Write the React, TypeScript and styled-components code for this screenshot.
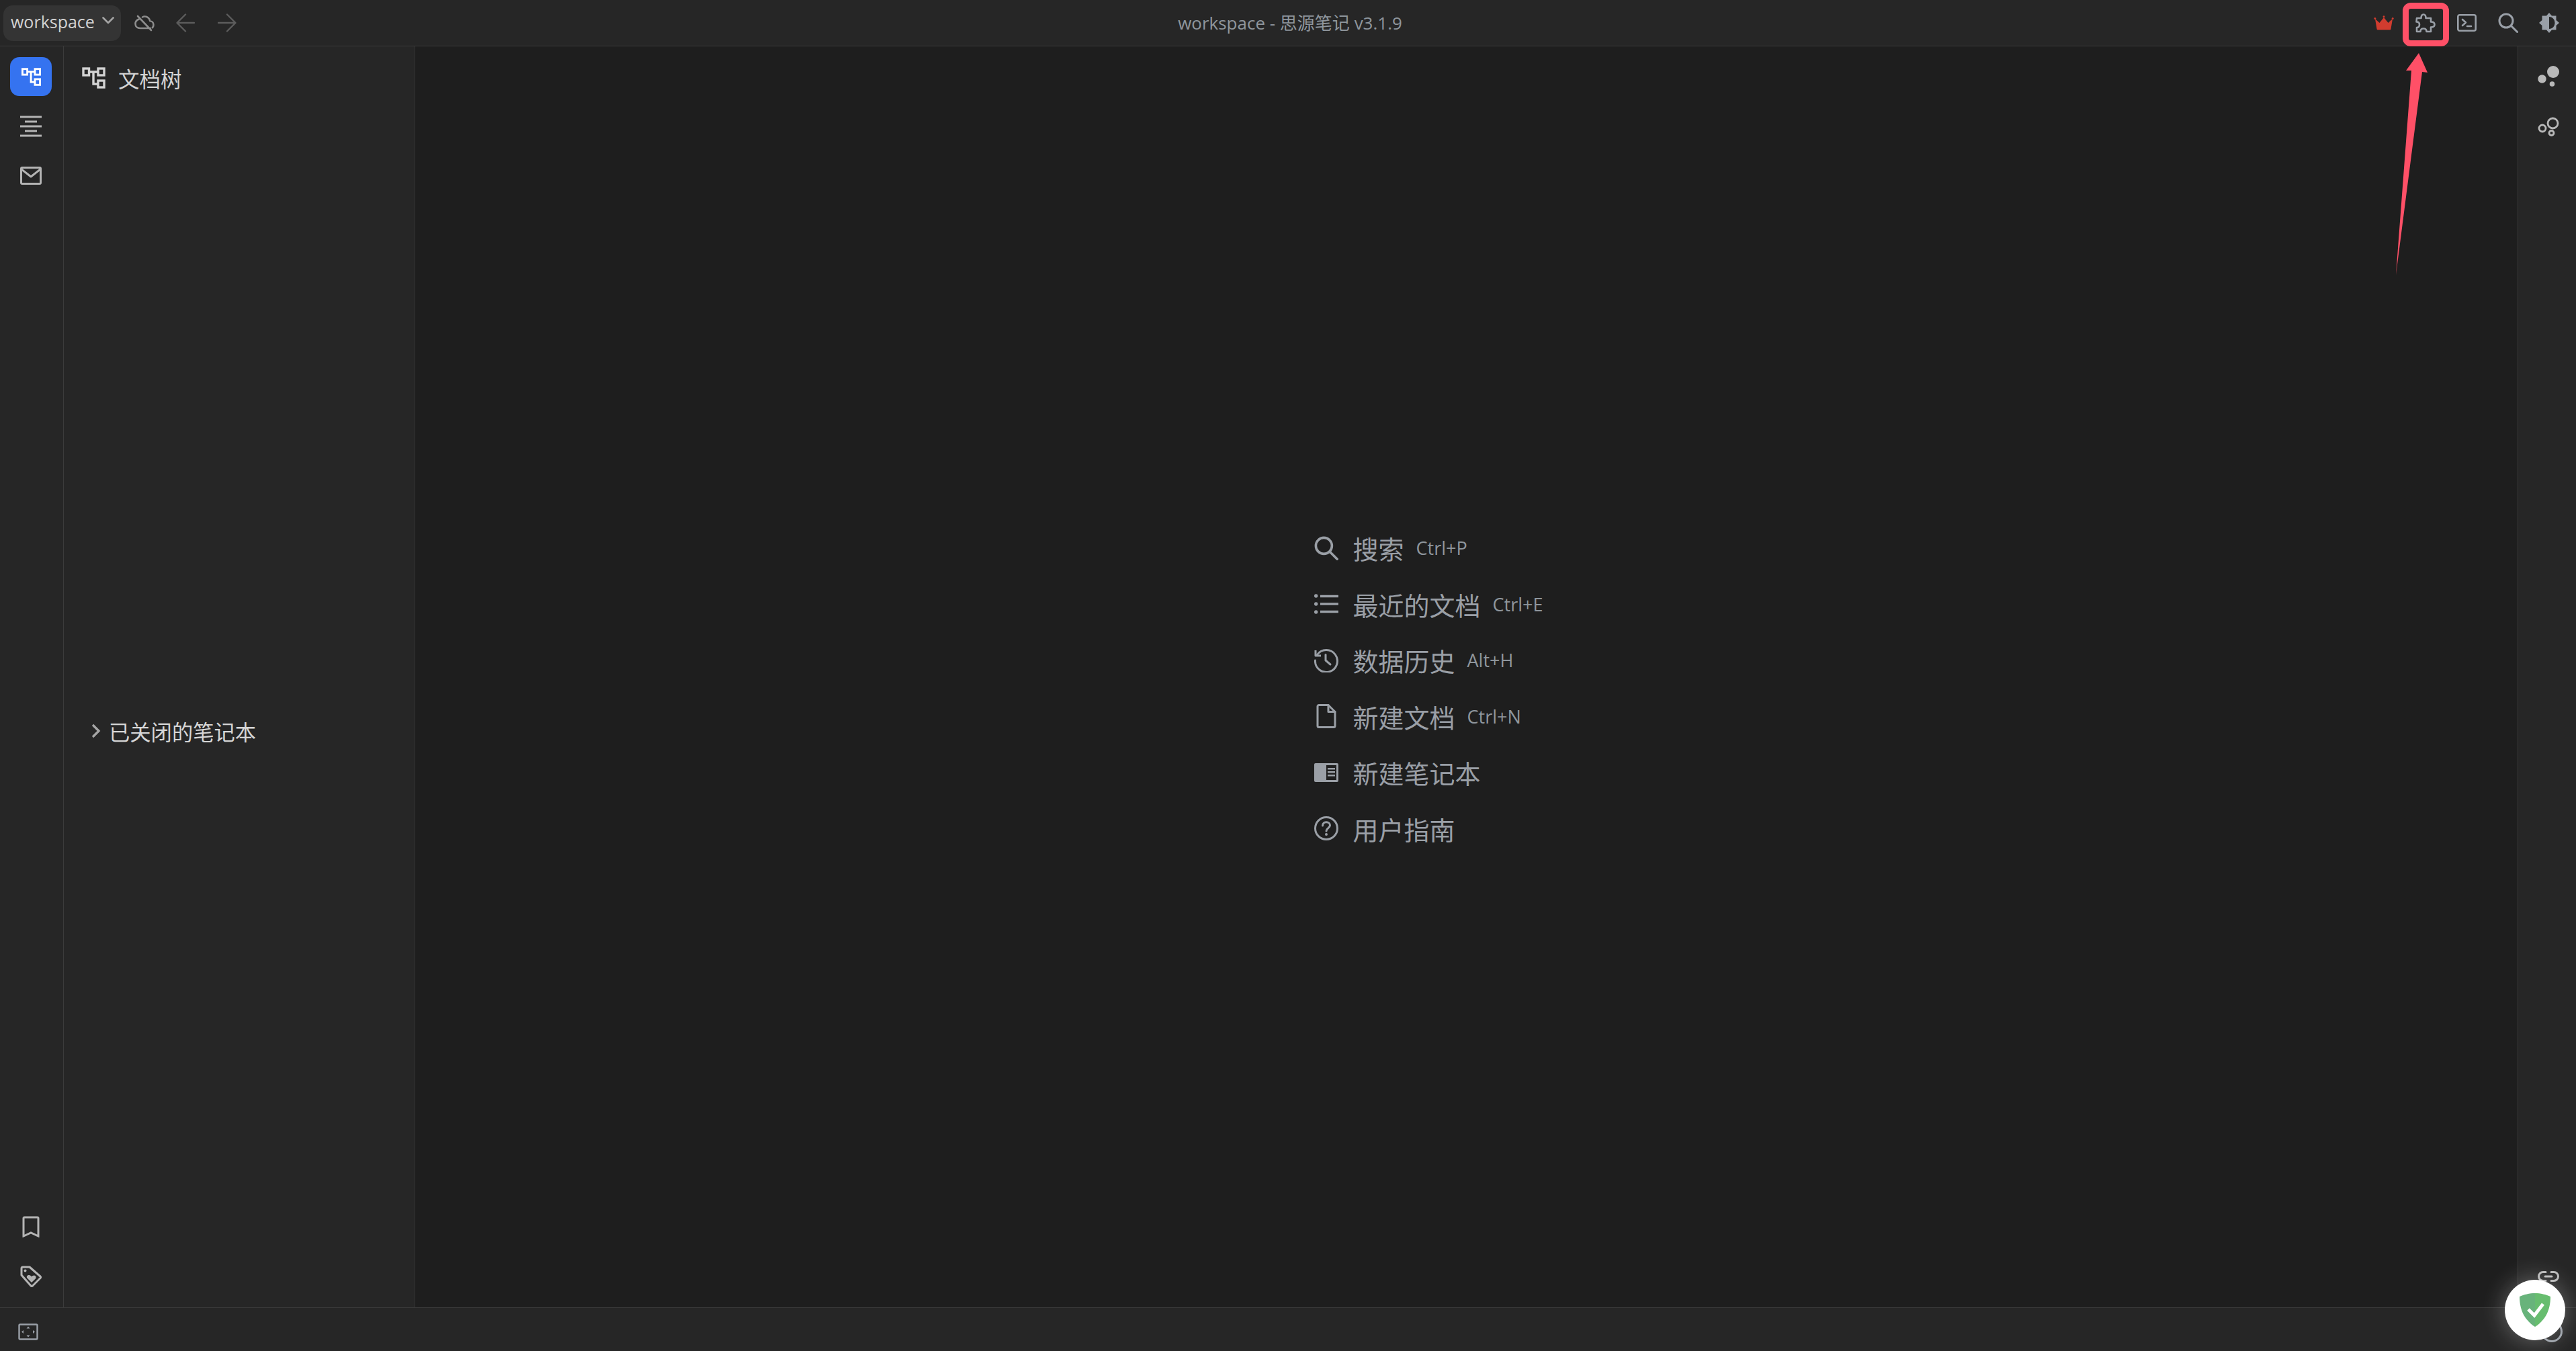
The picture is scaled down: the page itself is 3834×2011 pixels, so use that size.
import React from 'react'
import styled, { createGlobalStyle } from 'styled-components'

const GlobalStyle = createGlobalStyle`
  html, body {
    margin: 0;
    padding: 0;
    background: #1e1e1e;
  }
  body {
    font-family: "Open Sans", "Noto Sans", "Noto Sans CJK SC", sans-serif;
  }
`

type IconProps = { $w: number; $h: number; $color?: string }

const Svg = styled.svg<IconProps>`
  width: ${p => p.$w}px;
  height: ${p => p.$h}px;
  flex-shrink: 0;
  display: block;
  color: ${p => p.$color || 'currentColor'};
  fill: none;
  stroke: currentColor;
  stroke-linecap: round;
  stroke-linejoin: round;
`

const TreeIcon = ({ w = 35, h = 32 }: { w?: number; h?: number }) => (
  <Svg $w={w} $h={h} viewBox="0 0 35 32" strokeWidth="3.4" style={{ strokeLinecap: 'butt', strokeLinejoin: 'miter' }}>
    <rect x="2" y="2" width="8.5" height="10" />
    <rect x="24" y="2" width="9" height="10" />
    <rect x="24" y="20" width="9" height="10" />
    <path d="M10.5 7H24M17 7v18h7" />
  </Svg>
)

const OutlineIcon = () => (
  <Svg $w={32} $h={32} viewBox="0 0 32 32" strokeWidth="3" style={{ strokeLinecap: 'butt' }}>
    <path d="M0 2h32M7 9h18M0 16h32M7 23h18M0 30h32" />
  </Svg>
)

const InboxIcon = () => (
  <Svg $w={32} $h={28} viewBox="0 0 32 28" strokeWidth="3">
    <rect x="1.5" y="1.5" width="29" height="24" rx="1.5" />
    <path d="M2 4l14 11L30 4" />
  </Svg>
)

const BookmarkIcon = () => (
  <Svg $w={26} $h={32} viewBox="0 0 26 32" strokeWidth="3" style={{ strokeLinecap: 'butt', strokeLinejoin: 'miter' }}>
    <path d="M2 30V3.5A1.5 1.5 0 0 1 3.5 2h19A1.5 1.5 0 0 1 24 3.5V30l-11-5z" />
  </Svg>
)

const TagIcon = () => (
  <Svg $w={32} $h={32} viewBox="0 0 32 32" strokeWidth="3">
    <path d="M2 4a2 2 0 0 1 2-2h10l16 14a2 2 0 0 1 0 2.500L18.500 30a2 2 0 0 1-2.500 0L2 14z" />
    <circle cx="7.500" cy="7.500" r="2" fill="currentColor" stroke="none" />
    <path d="M17 25l-6.500-6.500c-1.800-2 .2-5 2.800-4.500 1.600.3 2.700 1.200 3.700 2.300 1-1.100 2.300-1.800 3.800-1.800 2.500.2 3.700 3 2 5z" fill="currentColor" stroke="none" />
  </Svg>
)

const LayoutIcon = () => (
  <Svg $w={30} $h={25} viewBox="0 0 30 25" strokeWidth="2.400">
    <rect x="1.500" y="1.500" width="27" height="22" rx="1.500" />
    <path d="M15 4.500l2.500 3h-5zM15 20.500l2.500-3h-5zM5 12.500l3-2.500v5zM25 12.500l-3-2.500v5z" fill="currentColor" stroke="none" />
  </Svg>
)

const CloudOffIcon = () => (
  <Svg $w={30} $h={25} viewBox="0 0 30 25" strokeWidth="2.600">
    <path d="M7 6.500C3.800 7.500 1.500 10 1.500 13.500c0 4 3 6.500 7 6.500h15.500M12 3.500c1-.6 2.200-1 3.500-1 4 0 7.200 3 7.800 6.800 3.200.2 5.200 2.700 5.200 5.700 0 1.700-.6 3-1.600 4.200M5 2l20 21" />
  </Svg>
)

const ArrowIcon = ({ flip }: { flip?: boolean }) => (
  <Svg $w={28} $h={28} viewBox="0 0 28 28" strokeWidth="2.400" style={flip ? { transform: 'scaleX(-1)' } : undefined}>
    <path d="M27 14H2M14 1.500L1.500 14 14 26.500" />
  </Svg>
)

const CrownIcon = () => (
  <Svg $w={30} $h={22} viewBox="0 0 30 22" style={{ stroke: 'none', fill: '#d13c2f' }}>
    <path d="M2 5l6.500 6L15 3l6.500 8L28 5l-2.500 15a1.500 1.500 0 0 1-1.500 1.500H6A1.500 1.500 0 0 1 4.500 20z" />
    <circle cx="1.800" cy="4.500" r="1.500" />
    <circle cx="15" cy="1.800" r="1.500" />
    <circle cx="28.200" cy="4.500" r="1.500" />
  </Svg>
)

const PluginIcon = () => (
  <Svg $w={31} $h={29} viewBox="-1 -1 31 29" strokeWidth="2.600">
    <path d="M2 6H8.500C8.500 2 10 .5 12 .5S15.500 2 15.500 6H23V11.500C27 11.500 28.500 13.500 28.500 15.500S27 19.500 23 19.500V26H16.500C16.500 23 14.500 21.500 12 21.500S7.500 23 7.500 26H2V20C5 20 6 18 6 15.500S5 11.500 1.500 11.500z" />
  </Svg>
)

const TerminalIcon = () => (
  <Svg $w={29} $h={26} viewBox="0 0 29 26" strokeWidth="2.600">
    <rect x="1.300" y="1.300" width="26.400" height="23.400" rx="2.500" />
    <path d="M8 8l5 4.500L8 17M15 18h6" />
  </Svg>
)

const SearchIcon = ({ size = 30 }: { size?: number }) => (
  <Svg $w={size} $h={size} viewBox="0 0 30 30" strokeWidth="3">
    <circle cx="12" cy="12" r="10" />
    <path d="M19.500 19.500L28.500 28.500" />
  </Svg>
)

const ThemeIcon = () => (
  <Svg $w={30} $h={30} viewBox="0 0 30 30" style={{ stroke: 'none', fill: 'currentColor' }}>
    <path fillRule="evenodd" d="M15 0l4 4.500h6.500V11l4.500 4-4.500 4v6.500H19L15 30l-4-4.500H4.500V19L0 15l4.500-4V4.500H11zM15 6v18c5 0 8.500-4 8.500-9s-3.500-9-8.500-9z" />
  </Svg>
)

const DotsIcon = ({ hollow }: { hollow?: boolean }) => (
  <Svg $w={32} $h={32} viewBox="0 0 32 32" strokeWidth={hollow ? 2.800 : 0} style={hollow ? undefined : { fill: 'currentColor' }}>
    {hollow ? (
      <>
        <circle cx="22.500" cy="9.500" r="7.500" />
        <circle cx="7" cy="17" r="5" />
        <circle cx="20.500" cy="24" r="3.500" />
      </>
    ) : (
      <>
        <circle cx="23" cy="9" r="9" />
        <circle cx="6.500" cy="19.500" r="6.200" />
        <circle cx="21.500" cy="27" r="3.800" />
      </>
    )}
  </Svg>
)

const LinkIcon = () => (
  <Svg $w={32} $h={16} viewBox="0 0 32 16" strokeWidth="3">
    <path d="M12 1.500H8a6.500 6.500 0 0 0 0 13h4M20 1.500h4a6.500 6.500 0 0 1 0 13h-4M11 8h10" />
  </Svg>
)

const HelpCircleIcon = () => (
  <Svg $w={32} $h={32} viewBox="0 0 32 32" strokeWidth="3">
    <circle cx="16" cy="16" r="14.500" />
  </Svg>
)

const ListIcon = () => (
  <Svg $w={36} $h={30} viewBox="0 0 36 30" strokeWidth="3.400" style={{ strokeLinecap: 'butt' }}>
    <path d="M9 3.500h27M9 15h27M9 26.500h27" />
    <circle cx="2.700" cy="3" r="2.700" fill="currentColor" stroke="none" />
    <circle cx="2.700" cy="15" r="2.700" fill="currentColor" stroke="none" />
    <circle cx="2.700" cy="27" r="2.700" fill="currentColor" stroke="none" />
  </Svg>
)

const HistoryIcon = () => (
  <Svg $w={36} $h={36} viewBox="0 0 36 36" strokeWidth="3">
    <path d="M4.500 9.500A16.500 16.500 0 1 1 1.500 18" />
    <path d="M2 3v8h8" strokeLinecap="butt" />
    <path d="M17 9.500V18l7 6" />
  </Svg>
)

const FileIcon = () => (
  <Svg $w={30} $h={36} viewBox="0 0 30 36" strokeWidth="3">
    <path d="M2 3.500A2 2 0 0 1 4 1.500h14l10 10V32.500a2 2 0 0 1-2 2H4a2 2 0 0 1-2-2z" />
    <path d="M18 1.500v10h10" />
  </Svg>
)

const NotebookIcon = () => (
  <Svg $w={36} $h={28} viewBox="0 0 36 28" style={{ stroke: 'none', fill: 'currentColor' }}>
    <path fillRule="evenodd" d="M2 0h32a2 2 0 0 1 2 2v24a2 2 0 0 1-2 2H2a2 2 0 0 1-2-2V2a2 2 0 0 1 2-2zM18 3v22h15V3zM20 7h11v2.500H20zM20 12h11v2.500H20zM20 17h11v2.500H20z" />
  </Svg>
)

const HelpIcon = () => (
  <Svg $w={36} $h={36} viewBox="0 0 36 36" strokeWidth="3">
    <circle cx="18" cy="18" r="16.500" />
    <path d="M12.500 14c0-3.200 2.500-5.300 5.500-5.300s5.500 2 5.500 4.800c0 4-5.500 4.300-5.500 8.500" />
    <circle cx="18" cy="27" r="2" fill="currentColor" stroke="none" />
  </Svg>
)

const Chevron = () => (
  <Svg $w={14} $h={22} viewBox="0 0 14 22" strokeWidth="3.400" style={{ strokeLinecap: 'butt', strokeLinejoin: 'miter' }}>
    <path d="M2 2l9 9-9 9" />
  </Svg>
)

const CaretDown = () => (
  <Svg $w={18} $h={11} viewBox="0 0 18 11" strokeWidth="2.600">
    <path d="M1.500 1.500L9 9l7.500-7.500" />
  </Svg>
)

const MENU_ITEMS = [
  { label: '搜索', key: 'Ctrl+P', icon: <SearchIcon size={36} /> },
  { label: '最近的文档', key: 'Ctrl+E', icon: <ListIcon /> },
  { label: '数据历史', key: 'Alt+H', icon: <HistoryIcon /> },
  { label: '新建文档', key: 'Ctrl+N', icon: <FileIcon /> },
  { label: '新建笔记本', icon: <NotebookIcon /> },
  { label: '用户指南', icon: <HelpIcon /> },
]

export default function App() {
  return (
    <Page>
      <GlobalStyle />
      <Toolbar>
        <ToolbarSide>
          <WorkspaceButton>
            workspace
            <CaretDown />
          </WorkspaceButton>
          <ToolButton $color="#8d8d8d"><CloudOffIcon /></ToolButton>
          <ToolButton $color="#5c5c5c"><ArrowIcon /></ToolButton>
          <ToolButton $color="#5c5c5c"><ArrowIcon flip /></ToolButton>
        </ToolbarSide>
        <Title>workspace - 思源笔记 v3.1.9</Title>
        <ToolbarRight>
          <ToolButton><CrownIcon /></ToolButton>
          <ToolButton>
            <PluginIcon />
            <Highlight />
          </ToolButton>
          <ToolButton><TerminalIcon /></ToolButton>
          <ToolButton><SearchIcon /></ToolButton>
          <ToolButton><ThemeIcon /></ToolButton>
        </ToolbarRight>
      </Toolbar>

      <Body>
        <LeftDock>
          <DockButton $active><TreeIcon w={31} h={27} /></DockButton>
          <DockButton><OutlineIcon /></DockButton>
          <DockButton><InboxIcon /></DockButton>
          <DockSpacer />
          <DockButton><BookmarkIcon /></DockButton>
          <DockButton><TagIcon /></DockButton>
        </LeftDock>

        <TreePanel>
          <PanelHeader>
            <TreeIcon />
            文档树
          </PanelHeader>
          <ClosedRow>
            <Chevron />
            已关闭的笔记本
          </ClosedRow>
        </TreePanel>

        <Main>
          <EmptyList>
            {MENU_ITEMS.map(item => (
              <EmptyItem key={item.label}>
                <EmptyIcon>{item.icon}</EmptyIcon>
                <EmptyLabel>{item.label}</EmptyLabel>
                {item.key && <Shortcut>{item.key}</Shortcut>}
              </EmptyItem>
            ))}
          </EmptyList>
        </Main>

        <RightDock>
          <RightButton><DotsIcon /></RightButton>
          <RightButton><DotsIcon hollow /></RightButton>
          <DockSpacer />
          <LinkSlot><LinkIcon /></LinkSlot>
        </RightDock>
      </Body>

      <StatusBar>
        <LayoutIcon />
        <HelpCircleIcon />
      </StatusBar>

      <CalloutArrow viewBox="0 0 60 335">
        <polygon points="40,0 21,26 29,26 6,330 45,28 53,29" />
      </CalloutArrow>

      <ShieldBadge>
        <svg width="48" height="50" viewBox="0 0 48 50">
          <path d="M24 0C16 0 7 2 1 5c0 18 6 34 23 45z" fill="#68b37b" />
          <path d="M24 0c8 0 17 2 23 5 0 18-6 34-23 45z" fill="#67bd6f" />
          <path d="M14 24l9 9 13-17" fill="none" stroke="#fff" strokeWidth="5" />
        </svg>
      </ShieldBadge>
    </Page>
  )
}

const Page = styled.div`
  position: relative;
  width: 100vw;
  height: 100vh;
  display: flex;
  flex-direction: column;
  overflow: hidden;
  background: #1e1e1e;
`

const Toolbar = styled.header`
  height: 68px;
  flex-shrink: 0;
  display: grid;
  grid-template-columns: 1fr auto 1fr;
  align-items: center;
  background: #262626;
  border-bottom: 1px solid #3b3b3b;
`

const ToolbarSide = styled.div`
  display: flex;
  align-items: center;
  padding-left: 5px;
`

const ToolbarRight = styled(ToolbarSide)`
  justify-content: flex-end;
  padding: 0 9px 0 0;
`

const WorkspaceButton = styled.div`
  width: 175px;
  height: 53px;
  box-sizing: border-box;
  margin-right: 4px;
  padding: 0 0 4px 11px;
  display: flex;
  align-items: center;
  gap: 11px;
  border-radius: 14px;
  background: #343434;
  color: #d3d3d3;
  font-size: 25px;
  svg {
    color: #a5a5a5;
    margin-top: -4px;
  }
`

const ToolButton = styled.div<{ $color?: string }>`
  position: relative;
  width: 61.5px;
  height: 68px;
  display: flex;
  align-items: center;
  justify-content: center;
  color: ${p => p.$color || '#9aa0a8'};
`

const Highlight = styled.span`
  position: absolute;
  left: -3px;
  top: 4px;
  width: 69px;
  height: 65px;
  box-sizing: border-box;
  border: 9px solid #ff5067;
  border-radius: 12px;
`

const Title = styled.div`
  padding: 0 0 3px 6px;
  color: #8f969d;
  font-size: 26px;
  white-space: nowrap;
`

const Body = styled.div`
  flex: 1;
  min-height: 0;
  display: flex;
`

const LeftDock = styled.aside`
  width: 95px;
  flex-shrink: 0;
  box-sizing: border-box;
  padding: 16px 16px 17px;
  display: flex;
  flex-direction: column;
  align-items: center;
  gap: 16px;
  background: #262626;
  border-right: 1px solid #3b3b3b;
`

const DockSpacer = styled.div`
  flex: 1;
`

const DockButton = styled.div<{ $active?: boolean }>`
  width: 62px;
  height: 58px;
  flex-shrink: 0;
  margin: 0 0 0 -2px;
  display: flex;
  align-items: center;
  justify-content: center;
  border-radius: 14px;
  background: ${p => (p.$active ? '#3573f0' : 'transparent')};
  color: ${p => (p.$active ? '#ffffff' : '#b4b4b4')};
`

const TreePanel = styled.section`
  width: 523px;
  flex-shrink: 0;
  box-sizing: border-box;
  background: #262626;
  border-right: 1px solid #333333;
`

const PanelHeader = styled.div`
  height: 94px;
  box-sizing: border-box;
  padding-left: 27px;
  display: flex;
  align-items: center;
  gap: 19px;
  color: #d3d3d3;
  font-size: 31.500px;
`

const ClosedRow = styled.div`
  height: 60px;
  margin-top: 895px;
  padding-left: 41px;
  display: flex;
  align-items: center;
  gap: 12px;
  color: #d6d6d6;
  font-size: 31.300px;
  svg {
    color: #a5a5a5;
  }
`

const Main = styled.main`
  flex: 1;
  min-width: 0;
  padding-top: 34px;
  display: flex;
  align-items: center;
  justify-content: center;
  background: #1e1e1e;
`

const EmptyList = styled.ul`
  width: 454px;
  margin: 0;
  padding: 0;
  list-style: none;
`

const EmptyItem = styled.li`
  height: 83.500px;
  display: flex;
  align-items: center;
  color: #9a9fa6;
`

const EmptyIcon = styled.span`
  width: 36px;
  margin-right: 22px;
  display: flex;
  justify-content: center;
`

const EmptyLabel = styled.span`
  font-size: 38px;
`

const Shortcut = styled.span`
  margin-left: 18px;
  font-size: 27px;
  color: #8f969d;
`

const RightDock = styled.aside`
  width: 87px;
  flex-shrink: 0;
  box-sizing: border-box;
  padding: 7px 0 38px;
  display: flex;
  flex-direction: column;
  align-items: center;
  background: #262626;
  border-left: 1px solid #3b3b3b;
  color: #b8b8b8;
`

const RightButton = styled.div`
  height: 76px;
  margin-left: 4px;
  display: flex;
  align-items: center;
`

const LinkSlot = styled.div`
  margin-left: 4px;
`

const StatusBar = styled.footer`
  height: 65px;
  flex-shrink: 0;
  box-sizing: border-box;
  padding: 6px 20px 0 27px;
  display: flex;
  align-items: center;
  justify-content: space-between;
  background: #262626;
  border-top: 1px solid #3b3b3b;
  color: #9aa0a8;
`

const CalloutArrow = styled.svg`
  position: absolute;
  left: 3560px;
  top: 79px;
  width: 60px;
  height: 335px;
  fill: #ff5067;
`

const ShieldBadge = styled.div`
  position: absolute;
  right: 16px;
  bottom: 16px;
  width: 90px;
  height: 90px;
  display: flex;
  align-items: center;
  justify-content: center;
  border-radius: 50%;
  background: #ffffff;
  box-shadow: 0 0 36px rgba(255, 255, 255, 0.32);
`
